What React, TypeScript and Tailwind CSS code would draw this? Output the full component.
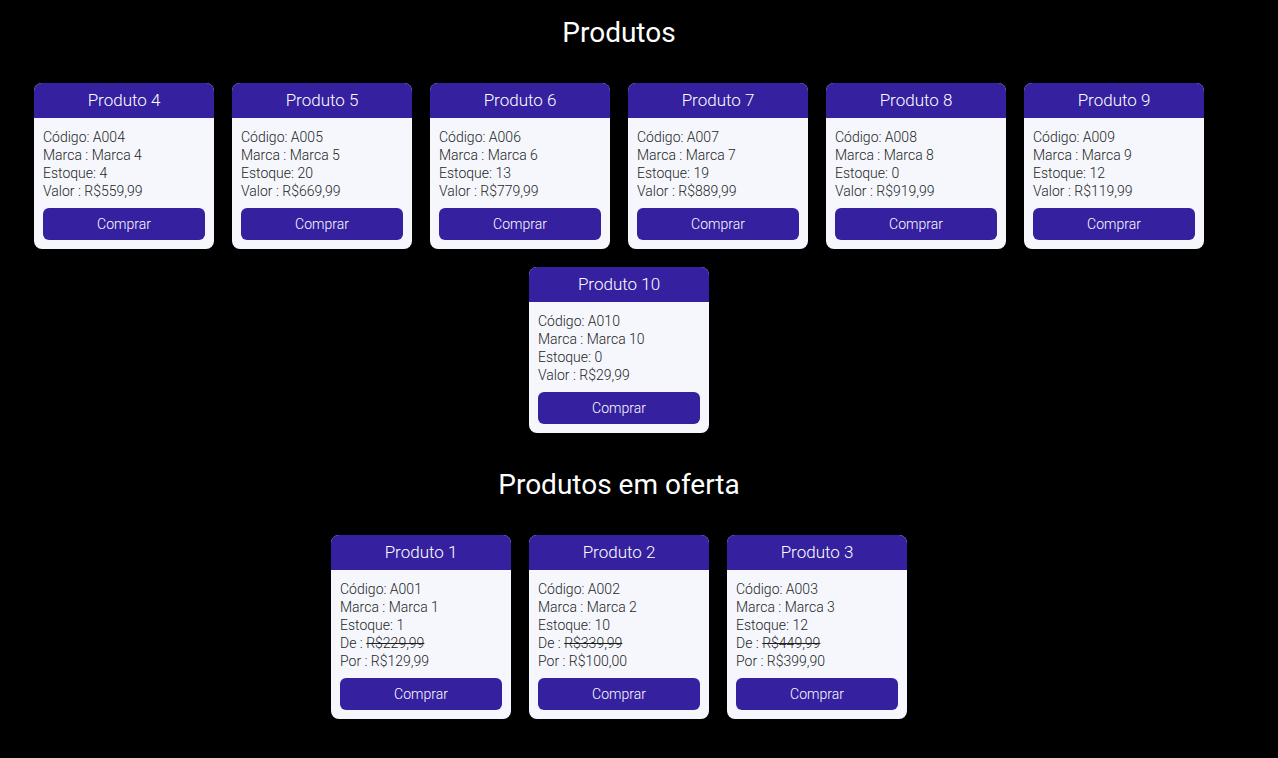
type Produto = {
  nome: string;
  codigo: string;
  marca: string;
  estoque: number;
  valor?: string;
  de?: string;
  por?: string;
};

const produtos: Produto[] = [
  { nome: "Produto 4", codigo: "A004", marca: "Marca 4", estoque: 4, valor: "R$559,99" },
  { nome: "Produto 5", codigo: "A005", marca: "Marca 5", estoque: 20, valor: "R$669,99" },
  { nome: "Produto 6", codigo: "A006", marca: "Marca 6", estoque: 13, valor: "R$779,99" },
  { nome: "Produto 7", codigo: "A007", marca: "Marca 7", estoque: 19, valor: "R$889,99" },
  { nome: "Produto 8", codigo: "A008", marca: "Marca 8", estoque: 0, valor: "R$919,99" },
  { nome: "Produto 9", codigo: "A009", marca: "Marca 9", estoque: 12, valor: "R$119,99" },
  { nome: "Produto 10", codigo: "A010", marca: "Marca 10", estoque: 0, valor: "R$29,99" },
];

const ofertas: Produto[] = [
  { nome: "Produto 1", codigo: "A001", marca: "Marca 1", estoque: 1, de: "R$229,99", por: "R$129,99" },
  { nome: "Produto 2", codigo: "A002", marca: "Marca 2", estoque: 10, de: "R$339,99", por: "R$100,00" },
  { nome: "Produto 3", codigo: "A003", marca: "Marca 3", estoque: 12, de: "R$449,99", por: "R$399,90" },
];

function Card({ p }: { p: Produto }) {
  return (
    <div className="w-[180px] rounded-[8px] overflow-hidden bg-[#f5f7fd]">
      <div className="h-[35px] bg-[#35209f] text-white text-[17px] font-light flex items-center justify-center">
        {p.nome}
      </div>
      <div className="px-[9px] pt-[10px] pb-[9px] text-[14px] leading-[18px] font-light text-[#1f1f1f]">
        <p>Código: {p.codigo}</p>
        <p>Marca : {p.marca}</p>
        <p>Estoque: {p.estoque}</p>
        {p.valor ? (
          <p>Valor : {p.valor}</p>
        ) : (
          <>
            <p>
              De : <span className="line-through">{p.de}</span>
            </p>
            <p>Por : {p.por}</p>
          </>
        )}
        <button className="mt-[8px] w-full h-[32px] rounded-[6px] bg-[#35209f] text-white text-[14px] font-light">
          Comprar
        </button>
      </div>
    </div>
  );
}

export default function App() {
  return (
    <div className="min-h-[758px] bg-black font-['Roboto',sans-serif] pt-[16px] pb-[40px]">
      <div className="w-[1238px]">
        <h1 className="text-white text-[28px] leading-[34px] text-center mb-[33px]">Produtos</h1>
        <div className="flex flex-wrap justify-center gap-[18px]">
          {produtos.map((p) => (
            <Card key={p.codigo} p={p} />
          ))}
        </div>
        <h1 className="text-white text-[28px] leading-[34px] text-center mt-[35px] mb-[33px]">
          Produtos em oferta
        </h1>
        <div className="flex flex-wrap justify-center gap-[18px]">
          {ofertas.map((p) => (
            <Card key={p.codigo} p={p} />
          ))}
        </div>
      </div>
    </div>
  );
}
